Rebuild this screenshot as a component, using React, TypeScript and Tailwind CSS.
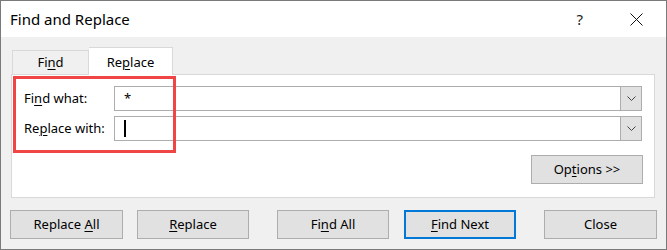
import React from 'react';

const font = { fontFamily: '"Segoe UI", "Noto Sans", "Open Sans", sans-serif' };

// Mnemonic letter with underline
function U({ children }: { children: React.ReactNode }) {
  return <span className="underline underline-offset-[2px] decoration-[1px]">{children}</span>;
}

function Chevron() {
  return (
    <svg width="9" height="5" viewBox="0 0 9 5" fill="none">
      <path d="M0.5 0.5 L4.5 4.5 L8.5 0.5" stroke="#444" strokeWidth="1" />
    </svg>
  );
}

function ComboBox({ children }: { children?: React.ReactNode }) {
  return (
    <div className="flex h-[25px] w-[528px] border border-[#adadad] bg-white">
      <div className="flex flex-1 items-center pl-[9px] text-[13px] text-black">{children}</div>
      <div className="flex w-[21px] items-center justify-center border-l border-[#adadad] bg-[#e1e1e1]">
        <Chevron />
      </div>
    </div>
  );
}

function Btn({ children, primary, className = '' }: { children: React.ReactNode; primary?: boolean; className?: string }) {
  return (
    <button
      className={`flex h-[29px] w-[112px] items-center justify-center bg-[#e1e1e1] text-[13px] text-black ${
        primary ? 'border-2 border-[#0078d7]' : 'border border-[#adadad]'
      } ${className}`}
    >
      <span>{children}</span>
    </button>
  );
}

export default function App() {
  return (
    <div style={font} className="flex h-[250px] w-[667px] flex-col border border-[#7a7a7a] bg-[#f0f0f0] text-black">
      {/* Title bar */}
      <div className="flex h-[36px] items-center bg-white pl-[9px]">
        <span className="text-[15px]">Find and Replace</span>
        <span className="ml-auto text-[15px] text-[#222]">?</span>
        <div className="ml-[47px] mr-[23px] flex h-[13px] w-[13px] items-center justify-center">
          <svg width="13" height="13" viewBox="0 0 13 13">
            <path d="M0.5 0.5 L12.5 12.5 M12.5 0.5 L0.5 12.5" stroke="#111" strokeWidth="1" />
          </svg>
        </div>
      </div>

      {/* Tabs */}
      <div className="ml-[11px] mt-[10px] flex h-[27px] items-end">
        <div className="flex h-[24px] w-[77px] items-center justify-center border border-b-0 border-[#d9d9d9] text-[13px]">
          <span>
            Fi<U>n</U>d
          </span>
        </div>
        <div className="relative z-10 -mb-px flex h-[28px] w-[84px] items-center justify-center border border-b-0 border-l-0 border-[#d9d9d9] bg-white pt-[3px] text-[13px]">
          <span>
            Re<U>p</U>lace
          </span>
        </div>
      </div>

      {/* Panel */}
      <div className="relative ml-[10px] flex h-[124px] w-[644px] flex-col border border-[#d9d9d9] bg-white px-[11px] pt-[11px]">
        <div className="flex items-center">
          <span className="w-[91px] pl-[1px] text-[13px]">
            Fi<U>n</U>d what:
          </span>
          <ComboBox>*</ComboBox>
        </div>
        <div className="mt-[5px] flex items-center">
          <span className="w-[91px] pl-[1px] text-[13px]">
            Re<U>p</U>lace with:
          </span>
          <ComboBox>
            <span className="h-[17px] w-[1.5px] bg-black" />
          </ComboBox>
        </div>
        <div className="mt-[14px] flex justify-end">
          <Btn>
            Op<U>t</U>ions &gt;&gt;
          </Btn>
        </div>
        {/* highlight box */}
        <div className="absolute left-[1px] top-[1px] h-[77px] w-[163px] border-[3px] border-[#f04545]" />
      </div>

      {/* Bottom buttons */}
      <div className="ml-[9px] mt-[12px] flex">
        <Btn className="w-[113px]">
          Replace <U>A</U>ll
        </Btn>
        <Btn className="ml-[14px]">
          <U>R</U>eplace
        </Btn>
        <Btn className="ml-[28px]">
          Fi<U>n</U>d All
        </Btn>
        <Btn primary className="ml-[15px]">
          <U>F</U>ind Next
        </Btn>
        <Btn className="ml-[28px] w-[113px]">Close</Btn>
      </div>
    </div>
  );
}
